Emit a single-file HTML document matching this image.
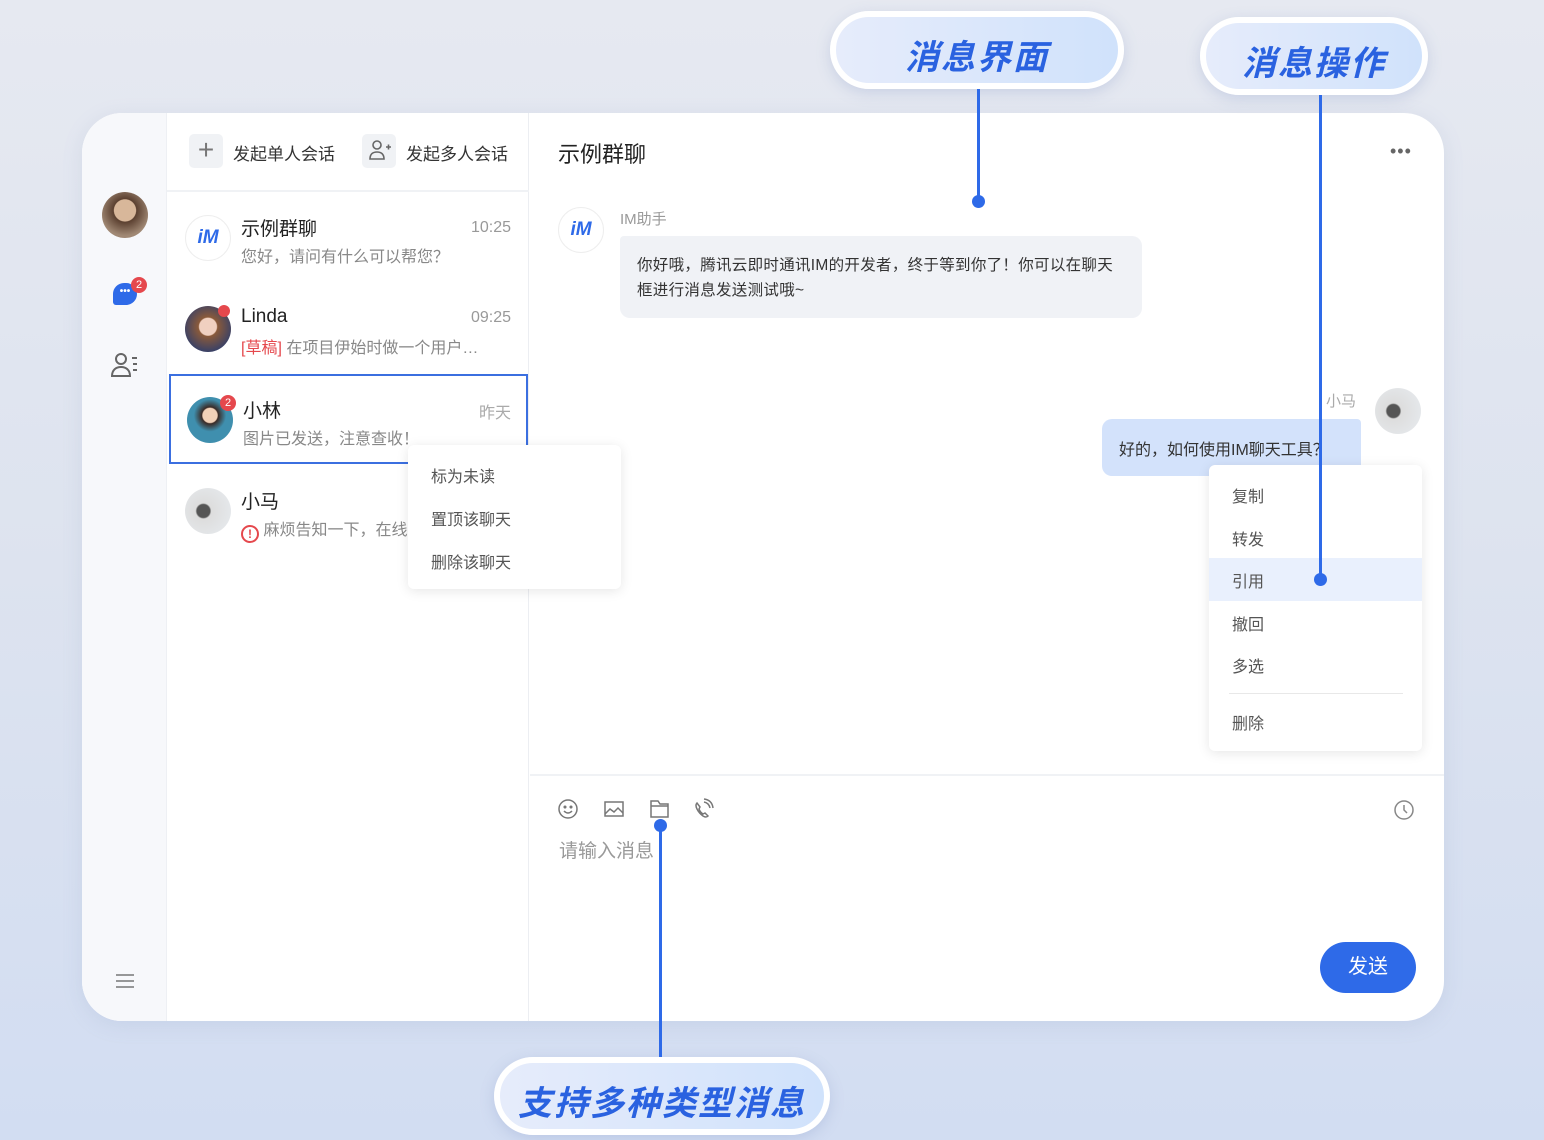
<!DOCTYPE html>
<html><head><meta charset="utf-8"><style>
*{margin:0;padding:0;box-sizing:border-box}
body{width:1544px;height:1140px;overflow:hidden;font-family:"Liberation Sans","Noto Sans CJK SC",sans-serif;background:linear-gradient(180deg,#e6e9f1 0%,#dde3ef 50%,#d2ddf2 100%);position:relative}
.abs{position:absolute}
.card{left:82px;top:113px;width:1362px;height:908px;background:#fff;border-radius:40px;overflow:hidden;box-shadow:0 4px 20px rgba(120,140,180,.15)}
.nav{left:0;top:0;width:85px;height:908px;background:#f7f8fb;border-right:1px solid #eef0f4}
.list{left:85px;top:0;width:362px;height:908px;border-right:1px solid #eceef2}
.t{color:#222;font-size:19px}
.s{color:#888;font-size:16px}
.av{border-radius:50%;width:46px;height:46px}
.pill{border-radius:40px;border:6px solid #fff;background:linear-gradient(90deg,#e6ecfb,#d0e2fb);box-shadow:0 4px 14px rgba(120,140,190,.25);color:#2a62e0;font-weight:bold;font-style:italic;text-align:center;letter-spacing:2px}
.line{background:#2e6ae8;width:3px}
.dot{width:13px;height:13px;border-radius:50%;background:#2e6ae8}
.menu{background:#fff;border-radius:6px;box-shadow:0 2px 12px rgba(0,0,0,.1);font-size:16px;color:#555}
.badge{background:#e5484d;color:#fff;font-size:11px;border-radius:50%;width:16px;height:16px;text-align:center;line-height:16px}
</style></head><body>
<div class="abs card">
 <div class="abs nav">
  <div class="abs av" style="left:20px;top:79px;background:radial-gradient(circle at 50% 40%,#d8b79a 0 30%,#5b4030 32%,#a08874 70%);"></div>
  <div class="abs" style="left:31px;top:170px;width:24px;height:22px;background:#2e6ae8;border-radius:11px 11px 11px 3px;color:#fff;font-size:10px;text-align:center;line-height:18px;font-weight:bold">•••</div>
  <div class="abs badge" style="left:49px;top:164px">2</div>
  <svg class="abs" style="left:28px;top:238px" width="30" height="28" viewBox="0 0 30 28" fill="none" stroke="#666" stroke-width="2"><circle cx="11" cy="8" r="5"/><path d="M2 25c0-6 4-9 9-9s9 3 9 9z"/><path d="M22 7h5M23 13h4M23 19h4"/></svg>
  <svg class="abs" style="left:33px;top:860px" width="20" height="16" stroke="#777" stroke-width="1.6"><path d="M1 2h18M1 8h18M1 14h18"/></svg>
 </div>
 <div class="abs list">
  <div class="abs" style="left:22px;top:21px;width:34px;height:34px;background:#f0f2f5;border-radius:5px;color:#777;font-size:28px;text-align:center;line-height:32px;font-weight:300">+</div>
  <div class="abs" style="left:66px;top:27px;font-size:17px;color:#333">发起单人会话</div>
  <div class="abs" style="left:195px;top:21px;width:34px;height:34px;background:#f0f2f5;border-radius:5px"><svg width="34" height="34" fill="none" stroke="#666" stroke-width="1.6"><circle cx="15" cy="11" r="4"/><path d="M8 25c0-5 3-7 7-7s7 2 7 7z"/><path d="M24 13h5M26.5 10.5v5"/></svg></div>
  <div class="abs" style="left:239px;top:27px;font-size:17px;color:#333">发起多人会话</div>
  <div class="abs" style="left:0;top:77px;width:362px;height:2px;background:#f0f2f5"></div>
  <div class="abs av" style="left:18px;top:102px;border:1px solid #eee;background:#fff;color:#2e6ae8;font-weight:bold;font-style:italic;font-size:19px;text-align:center;line-height:44px">iM</div>
  <div class="abs t" style="left:74px;top:101px">示例群聊</div><div class="abs s" style="right:17px;top:106px;color:#999">10:25</div>
  <div class="abs s" style="left:74px;top:130px">您好，请问有什么可以帮您？</div>
  <div class="abs av" style="left:18px;top:193px;background:radial-gradient(circle at 50% 45%,#f0d0c0 0 25%,#8a5a3a 28%,#2d3d6d 80%)"></div>
  <div class="abs" style="left:51px;top:192px;width:12px;height:12px;border-radius:50%;background:#e5484d"></div>
  <div class="abs t" style="left:74px;top:193px">Linda</div><div class="abs s" style="right:17px;top:196px;color:#999">09:25</div>
  <div class="abs s" style="left:74px;top:221px"><span style="color:#e5484d">[草稿]</span> 在项目伊始时做一个用户…</div>
  <div class="abs" style="left:2px;top:261px;width:359px;height:90px;border:2px solid #3b6fe0"></div>
  <div class="abs av" style="left:20px;top:284px;background:radial-gradient(circle at 50% 40%,#f1d1b8 0 20%,#3a2a25 23%,#3f8fae 45%)"></div>
  <div class="abs badge" style="left:53px;top:282px">2</div>
  <div class="abs t" style="left:76px;top:283px">小林</div><div class="abs s" style="right:17px;top:286px;color:#aaa">昨天</div>
  <div class="abs s" style="left:76px;top:312px">图片已发送，注意查收！</div>
  <div class="abs av" style="left:18px;top:375px;background:radial-gradient(circle at 40% 50%,#555 0 18%,#ddd 22%,#e8ecf0)"></div>
  <div class="abs t" style="left:74px;top:374px">小马</div>
  <div class="abs s" style="left:74px;top:403px"><span style="display:inline-block;width:18px;height:18px;border:2px solid #e5484d;border-radius:50%;color:#e5484d;font-size:12px;text-align:center;line-height:14px;font-weight:bold;vertical-align:-3px">!</span> 麻烦告知一下，在线</div>
 </div>
 <div class="abs menu" style="left:326px;top:332px;width:213px;height:144px">
  <div class="abs" style="left:23px;top:18px">标为未读</div>
  <div class="abs" style="left:23px;top:61px">置顶该聊天</div>
  <div class="abs" style="left:23px;top:104px">删除该聊天</div>
 </div>
 <div class="abs" style="left:476px;top:24px;font-size:22px;color:#222">示例群聊</div>
 <div class="abs" style="left:1308px;top:28px;color:#666;font-size:18px;letter-spacing:1px">•••</div>
 <div class="abs av" style="left:476px;top:94px;border:1px solid #eee;background:#fff;color:#2e6ae8;font-weight:bold;font-style:italic;font-size:19px;text-align:center;line-height:44px">iM</div>
 <div class="abs" style="left:538px;top:95px;font-size:15px;color:#999">IM助手</div>
 <div class="abs" style="left:538px;top:123px;width:522px;height:82px;background:#f0f2f6;border-radius:4px 10px 10px 10px;padding:17px 17px;font-size:15.5px;color:#333;line-height:25px;letter-spacing:.3px">你好哦，腾讯云即时通讯IM的开发者，终于等到你了！你可以在聊天框进行消息发送测试哦~</div>
 <div class="abs" style="left:1244px;top:277px;font-size:15px;color:#aaa">小马</div>
 <div class="abs av" style="left:1293px;top:275px;background:radial-gradient(circle at 40% 50%,#555 0 18%,#ddd 22%,#e8ecf0)"></div>
 <div class="abs" style="left:1020px;top:306px;width:259px;height:57px;background:#d3e2fb;border-radius:10px 4px 10px 10px;font-size:16px;color:#333;padding:17px 17px">好的，如何使用IM聊天工具？</div>
 <div class="abs menu" style="left:1127px;top:352px;width:213px;height:286px">
  <div class="abs" style="left:23px;top:18px">复制</div>
  <div class="abs" style="left:23px;top:61px">转发</div>
  <div class="abs" style="left:0;top:93px;width:213px;height:43px;background:#e9f0fd"></div>
  <div class="abs" style="left:23px;top:103px">引用</div>
  <div class="abs" style="left:23px;top:146px">撤回</div>
  <div class="abs" style="left:23px;top:188px">多选</div>
  <div class="abs" style="left:20px;top:228px;width:174px;height:1px;background:#e8e8e8"></div>
  <div class="abs" style="left:23px;top:245px">删除</div>
 </div>
 <div class="abs" style="left:448px;top:661px;width:914px;height:2px;background:#f0f2f5"></div>
 <svg class="abs" style="left:474px;top:684px" width="170" height="26" fill="none" stroke="#777" stroke-width="1.5">
  <circle cx="12" cy="12" r="9"/><circle cx="9" cy="10" r=".8" fill="#777"/><circle cx="15" cy="10" r=".8" fill="#777"/><path d="M8 14q4 4 8 0"/>
  <rect x="49" y="5" width="18" height="14"/><path d="M49 17l5-5 4 3 4-4 5 5"/>
  <path d="M95 4h7l2 3h8v13h-17zM95 9h17"/>
  <path d="M141 6q-2 2 0 6t6 7q3 2 5 0l-3-3-2 1q-3-2-4-5l1-2z M148 5q5 1 6 6M148 2q8 1 9 9"/>
 </svg>
 <svg class="abs" style="left:1311px;top:686px" width="22" height="22" fill="none" stroke="#888" stroke-width="1.5"><circle cx="11" cy="11" r="9"/><path d="M11 6v5l3 3"/></svg>
 <div class="abs" style="left:477px;top:723px;font-size:19px;color:#999">请输入消息</div>
 <div class="abs" style="left:1238px;top:829px;width:96px;height:51px;background:#2e6ae8;border-radius:26px;color:#fff;font-size:20px;text-align:center;line-height:51px">发送</div>
</div>
<div class="abs pill" style="left:830px;top:11px;width:294px;height:78px;font-size:34px;line-height:66px;padding-top:8px">消息界面</div>
<div class="abs pill" style="left:1200px;top:17px;width:228px;height:78px;font-size:34px;line-height:66px;padding-top:8px">消息操作</div>
<div class="abs pill" style="left:494px;top:1057px;width:336px;height:78px;font-size:34px;line-height:66px;padding-top:8px">支持多种类型消息</div>
<div class="abs line" style="left:977px;top:89px;height:112px"></div>
<div class="abs dot" style="left:972px;top:195px"></div>
<div class="abs line" style="left:1319px;top:95px;height:485px"></div>
<div class="abs dot" style="left:1314px;top:573px"></div>
<div class="abs line" style="left:659px;top:826px;height:231px"></div>
<div class="abs dot" style="left:654px;top:819px"></div>
</body></html>
